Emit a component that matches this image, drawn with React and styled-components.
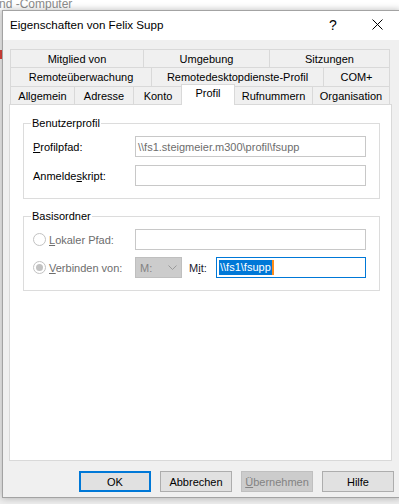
import React from 'react';
import styled, { createGlobalStyle } from 'styled-components';

const UI = `"Liberation Sans", Arial, sans-serif`;
const TITLE = `"Liberation Sans", Arial, sans-serif`;
const UI_SIZE = '11px';

const Global = createGlobalStyle`
  html, body { margin: 0; padding: 0; }
  body { width: 399px; height: 504px; overflow: hidden; background: #f0f0f0; }
`;

const Desktop = styled.div`
  position: relative;
  width: 399px;
  height: 504px;
  overflow: hidden;
  box-sizing: border-box;
  padding: 10px 0 0 2px;
  background: #ededed;
`;

const BackTitle = styled.div`
  position: absolute;
  top: 0;
  left: 0;
  right: 0;
  height: 10px;
  background: #ffffff;
  overflow: hidden;
`;

const BackText = styled.span`
  position: absolute;
  top: -2px;
  left: -1px;
  font: 12px ${TITLE};
  line-height: 13px;
  color: #8c8c8c;
  white-space: nowrap;
`;

const BackMark = styled.div`
  position: absolute;
  left: 0;
  top: 50px;
  width: 2px;
  height: 9px;
  background: #d9413a;
`;

const Window = styled.div`
  position: relative;
  width: 399px;
  height: 488px;
  box-sizing: border-box;
  border: 1px solid #a3a3a3;
  background: #f0f0f0;
  box-shadow: 0 0 7px rgba(0, 0, 0, 0.28);
  display: flex;
  flex-direction: column;
`;

const TitleBar = styled.div`
  height: 29px;
  flex: 0 0 29px;
  background: #ffffff;
  display: flex;
  align-items: center;
  padding-left: 7px;
`;

const TitleText = styled.div`
  flex: 1;
  font: 11.6px ${TITLE};
  color: #000;
  padding-bottom: 2px;
`;

const CaptionButton = styled.div`
  width: ${p => p.$w}px;
  height: 29px;
  display: flex;
  align-items: center;
  justify-content: center;
  font: 14px ${TITLE};
  color: #000;
  padding-bottom: 2px;
  box-sizing: border-box;
`;

const Body = styled.div`
  flex: 1;
  padding: 9px 6px 0 6px;
  display: flex;
  flex-direction: column;
`;

const TabStrip = styled.div`
  margin-left: 1px;
  width: 380px;
  display: flex;
  flex-direction: column;
`;

const TabRow = styled.div`
  display: flex;
  height: ${p => p.$h}px;
  align-items: flex-start;
`;

const Tab = styled.div`
  flex: 0 0 ${p => p.$w}px;
  box-sizing: border-box;
  height: ${p => p.$h}px;
  border-top: 1px solid #d9d9d9;
  border-left: 1px solid #d9d9d9;
  border-right: ${p => (p.$last ? '1px solid #d9d9d9' : '0')};
  background: #f0f0f0;
  display: flex;
  align-items: center;
  justify-content: center;
  font: ${UI_SIZE} ${UI};
  color: #000;
  white-space: nowrap;
  overflow: hidden;
`;

const ActiveTab = styled(Tab)`
  position: relative;
  z-index: 2;
  flex-basis: ${p => p.$w + 2}px;
  height: ${p => p.$h + 3}px;
  margin: -2px -1px 0 -1px;
  border-right: 1px solid #d9d9d9;
  background: #ffffff;
  align-items: flex-start;
  padding-top: 2px;
`;

const Panel = styled.div`
  width: 383px;
  height: 357px;
  box-sizing: border-box;
  background: #ffffff;
  border: 1px solid #d9d9d9;
  padding: 11px 11px 0 13px;
  display: flex;
  flex-direction: column;
  gap: ${p => p.$gap}px;
`;

const Group = styled.fieldset`
  margin: 0;
  min-inline-size: 0;
  border: 1px solid #dcdcdc;
  padding: 6px 13px 12px 9px;
  display: flex;
  flex-direction: column;
  gap: ${p => p.$gap}px;
`;

const Legend = styled.legend`
  font: ${UI_SIZE} ${UI};
  line-height: 14px;
  color: #000;
  padding: 0 1px;
  margin-left: -2px;
`;

const FormRow = styled.div`
  display: grid;
  grid-template-columns: 102px 1fr;
  align-items: center;
  height: 21px;
`;

const Label = styled.span`
  font: ${UI_SIZE} ${UI};
  color: ${p => (p.$disabled ? '#6d6d6d' : '#000')};
  white-space: nowrap;
`;

const RadioLabel = styled.label`
  display: flex;
  align-items: center;
  gap: 3px;
`;

const Radio = styled.span`
  width: 13px;
  height: 13px;
  box-sizing: border-box;
  border-radius: 50%;
  border: 1px solid #c2c2c2;
  background: #ffffff;
  display: flex;
  align-items: center;
  justify-content: center;
  &::after {
    content: '';
    width: 7px;
    height: 7px;
    border-radius: 50%;
    background: ${p => (p.$checked ? '#c2c2c2' : 'transparent')};
  }
`;

const Field = styled.div`
  height: 21px;
  box-sizing: border-box;
  border: 1px solid ${p => (p.$focus ? '#0078d7' : '#c8c8c8')};
  background: #ffffff;
  display: flex;
  align-items: center;
  padding: 0 2px;
  font: ${UI_SIZE} ${UI};
  color: #6d6d6d;
  white-space: nowrap;
  overflow: hidden;
  flex: 1;
  min-width: 0;
`;

const Selection = styled.span`
  background: #0078d7;
  color: #ffffff;
  line-height: 15px;
  padding: 0 1px 0 1px;
`;

const Caret = styled.span`
  width: 2px;
  height: 15px;
  background: #ff8c1a;
`;

const InlineRow = styled.div`
  display: flex;
  align-items: center;
  height: 21px;
`;

const Combo = styled.div`
  width: 47px;
  height: 21px;
  box-sizing: border-box;
  background: #cccccc;
  border: 1px solid #bfbfbf;
  display: flex;
  align-items: center;
  justify-content: space-between;
  padding: 0 4px 0 4px;
  font: ${UI_SIZE} ${UI};
  color: #838383;
`;

const MitLabel = styled(Label)`
  width: 27px;
  margin-left: 7px;
  color: #1a1a2e;
`;

const ButtonBar = styled.div`
  display: flex;
  justify-content: flex-end;
  gap: 9px;
  margin-top: 10px;
`;

const Button = styled.div`
  width: 72px;
  height: 21px;
  box-sizing: border-box;
  border: ${p => (p.$default ? '2px solid #0078d7' : p.$disabled ? '1px solid #bfbfbf' : '1px solid #adadad')};
  background: ${p => (p.$disabled ? '#cccccc' : '#e1e1e1')};
  color: ${p => (p.$disabled ? '#838383' : '#000')};
  display: flex;
  align-items: center;
  justify-content: center;
  font: ${UI_SIZE} ${UI};
`;

const U = styled.u`
  text-underline-offset: 1px;
`;

const tabRows = [
  { h: 18, tabs: [['Mitglied von', 133], ['Umgebung', 126], ['Sitzungen', 121]] },
  { h: 19, tabs: [['Remoteüberwachung', 141], ['Remotedesktopdienste-Profil', 172], ['COM+', 67]] },
  {
    h: 18,
    tabs: [
      ['Allgemein', 64],
      ['Adresse', 59],
      ['Konto', 49],
      ['Profil', 52, true],
      ['Rufnummern', 78],
      ['Organisation', 78],
    ],
  },
];

const CloseIcon = () => (
  <svg width="11" height="11" viewBox="0 0 11 11">
    <path d="M0.5 0.5 L10.5 10.5 M10.5 0.5 L0.5 10.5" stroke="#000" strokeWidth="1" fill="none" />
  </svg>
);

const Chevron = () => (
  <svg width="9" height="5" viewBox="0 0 9 5">
    <path d="M0.5 0.5 L4.5 4.5 L8.5 0.5" stroke="#9a9a9a" strokeWidth="1" fill="none" />
  </svg>
);

export default function App() {
  return (
    <>
      <Global />
      <Desktop>
        <BackTitle>
          <BackText>nd -Computer</BackText>
        </BackTitle>
        <BackMark />
        <Window>
          <TitleBar>
            <TitleText>Eigenschaften von Felix Supp</TitleText>
            <CaptionButton $w={44}>?</CaptionButton>
            <CaptionButton $w={45}>
              <CloseIcon />
            </CaptionButton>
          </TitleBar>
          <Body>
            <TabStrip>
              {tabRows.map((row, ri) => (
                <TabRow key={ri} $h={row.h}>
                  {row.tabs.map(([label, w, active], i) =>
                    active ? (
                      <ActiveTab key={label} $w={w} $h={row.h}>
                        {label}
                      </ActiveTab>
                    ) : (
                      <Tab key={label} $w={w} $h={row.h} $last={i === row.tabs.length - 1}>
                        {label}
                      </Tab>
                    )
                  )}
                </TabRow>
              ))}
            </TabStrip>
            <Panel $gap={10}>
              <Group $gap={8}>
                <Legend>Benutzerprofil</Legend>
                <FormRow>
                  <Label>
                    <U>P</U>rofilpfad:
                  </Label>
                  <Field>\\fs1.steigmeier.m300\profil\fsupp</Field>
                </FormRow>
                <FormRow>
                  <Label>
                    Anmelde<U>s</U>kript:
                  </Label>
                  <Field />
                </FormRow>
              </Group>
              <Group $gap={7}>
                <Legend>Basisordner</Legend>
                <FormRow>
                  <RadioLabel>
                    <Radio />
                    <Label $disabled>
                      <U>L</U>okaler Pfad:
                    </Label>
                  </RadioLabel>
                  <Field />
                </FormRow>
                <FormRow>
                  <RadioLabel>
                    <Radio $checked />
                    <Label $disabled>
                      <U>V</U>erbinden von:
                    </Label>
                  </RadioLabel>
                  <InlineRow>
                    <Combo>
                      <span>M:</span>
                      <Chevron />
                    </Combo>
                    <MitLabel>
                      M<U>i</U>t:
                    </MitLabel>
                    <Field $focus>
                      <Selection>\\fs1\fsupp</Selection>
                      <Caret />
                    </Field>
                  </InlineRow>
                </FormRow>
              </Group>
            </Panel>
            <ButtonBar>
              <Button $default>OK</Button>
              <Button>Abbrechen</Button>
              <Button $disabled>
                <U>Ü</U>bernehmen
              </Button>
              <Button>Hilfe</Button>
            </ButtonBar>
          </Body>
        </Window>
      </Desktop>
    </>
  );
}
